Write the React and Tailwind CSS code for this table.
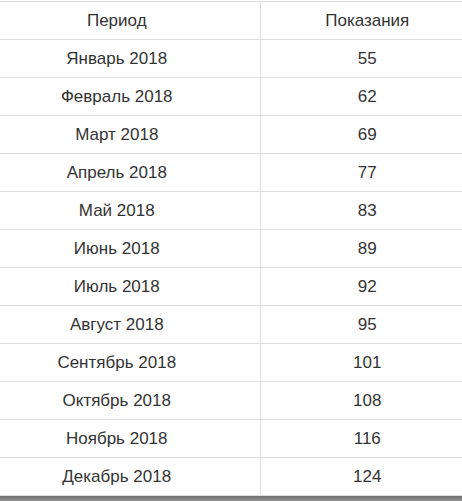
import React from 'react';

const rows = [
  ['Январь 2018', '55'],
  ['Февраль 2018', '62'],
  ['Март 2018', '69'],
  ['Апрель 2018', '77'],
  ['Май 2018', '83'],
  ['Июнь 2018', '89'],
  ['Июль 2018', '92'],
  ['Август 2018', '95'],
  ['Сентябрь 2018', '101'],
  ['Октябрь 2018', '108'],
  ['Ноябрь 2018', '116'],
  ['Декабрь 2018', '124'],
];

function App() {
  return (
    <div className="w-[462px] h-[501px] bg-white overflow-hidden font-['Liberation_Sans'] text-[17px] text-[#333]">
      <div className="pt-px">
        <table className="w-full border-collapse">
          <thead>
            <tr className="h-[38px] border-t border-b border-[#dddddd]">
              <th className="w-[260px] pr-[26px] font-normal text-center border-r border-[#dddddd]">Период</th>
              <th className="pl-[12px] font-normal text-center">Показания</th>
            </tr>
          </thead>
          <tbody>
            {rows.map(([period, value]) => (
              <tr key={period} className="h-[38px] border-b border-[#dddddd]">
                <td className="pr-[26px] text-center border-r border-[#dddddd]">{period}</td>
                <td className="pl-[12px] text-center">{value}</td>
              </tr>
            ))}
          </tbody>
        </table>
      </div>
      <div className="h-[6px] bg-gradient-to-b from-[#707070] to-[#9a9a9a]"></div>
    </div>
  );
}

export default App;
